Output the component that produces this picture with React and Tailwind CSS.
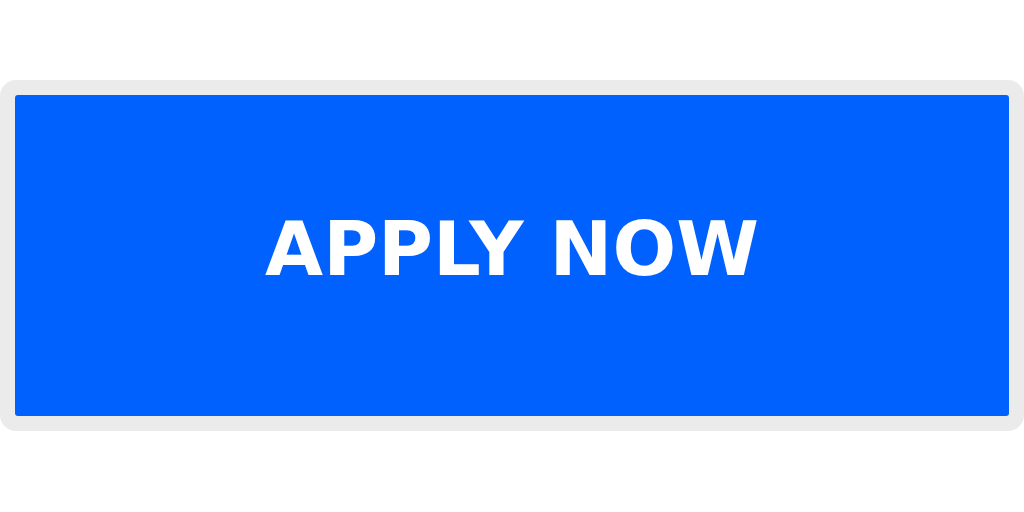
export default function App() {
  return (
    <div className="h-[512px] w-[1024px] bg-white pt-[80px]">
      <div className="h-[351px] w-full rounded-[16px] bg-[#ebebeb] p-[15px]">
        <div className="flex h-full w-full items-center justify-center rounded-[3px] bg-[#0061fe]">
          <span className="pb-[12px] font-['DejaVu_Sans',sans-serif] text-[75px] font-bold leading-none text-white">
            APPLY NOW
          </span>
        </div>
      </div>
    </div>
  );
}
